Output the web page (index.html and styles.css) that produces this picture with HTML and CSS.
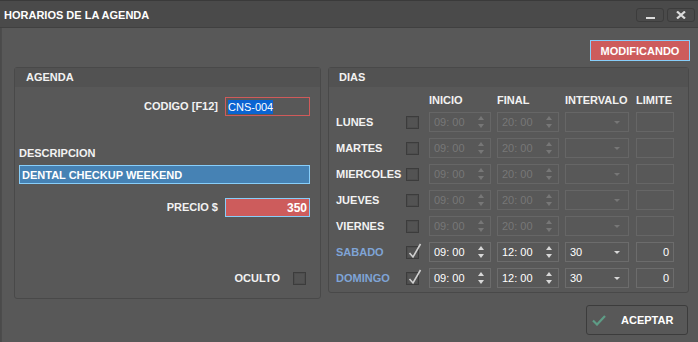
FILE: index.html
```html
<!DOCTYPE html>
<html lang="es">
<head>
  <meta charset="UTF-8">
  <title>Horarios de la agenda</title>
  <link rel="stylesheet" href="styles.css">
</head>
<body>

  <div class="window">

    <!-- Barra de titulo -->
    <div class="titlebar">
      <span class="title">HORARIOS DE LA AGENDA</span>
      <div class="winbtns">
        <div class="winbtn"><span class="dash"></span></div>
        <div class="winbtn">
          <svg width="10" height="8" viewBox="0 0 10 8"><path d="M1 0.5 L9 7.5 M9 0.5 L1 7.5" stroke="#dcdcdc" stroke-width="2.2"/></svg>
        </div>
      </div>
    </div>

    <div class="content">
      <div class="status">
        <span class="badge">MODIFICANDO</span>
      </div>

      <div class="groups">
        <!-- Agenda -->
        <section class="group agenda">
          <div class="group-head">AGENDA</div>
          <div class="agenda-body">
            <div class="field-row codigo">
              <label>CODIGO [F12]</label>
              <div class="input code"><span class="sel">CNS-004</span></div>
            </div>
            <label class="desc-label">DESCRIPCION</label>
            <div class="input desc">DENTAL CHECKUP WEEKEND</div>
            <div class="field-row precio">
              <label>PRECIO $</label>
              <div class="input price">350</div>
            </div>
            <div class="field-row oculto">
              <label>OCULTO</label>
              <span class="check"></span>
            </div>
          </div>
        </section>

        <!-- Dias -->
        <section class="group dias">
          <div class="group-head">DIAS</div>
          <div class="dias-grid">
            <span></span><span></span>
            <span class="col-head">INICIO</span>
            <span class="col-head">FINAL</span>
            <span class="col-head">INTERVALO</span>
            <span class="col-head">LIMITE</span>

            <span class="day">LUNES</span>
            <span class="check"></span>
            <div class="spin off">09: 00<i></i></div>
            <div class="spin off">20: 00<i></i></div>
            <div class="combo off"><b></b></div>
            <div class="limit off"></div>

            <span class="day">MARTES</span>
            <span class="check"></span>
            <div class="spin off">09: 00<i></i></div>
            <div class="spin off">20: 00<i></i></div>
            <div class="combo off"><b></b></div>
            <div class="limit off"></div>

            <span class="day">MIERCOLES</span>
            <span class="check"></span>
            <div class="spin off">09: 00<i></i></div>
            <div class="spin off">20: 00<i></i></div>
            <div class="combo off"><b></b></div>
            <div class="limit off"></div>

            <span class="day">JUEVES</span>
            <span class="check"></span>
            <div class="spin off">09: 00<i></i></div>
            <div class="spin off">20: 00<i></i></div>
            <div class="combo off"><b></b></div>
            <div class="limit off"></div>

            <span class="day">VIERNES</span>
            <span class="check"></span>
            <div class="spin off">09: 00<i></i></div>
            <div class="spin off">20: 00<i></i></div>
            <div class="combo off"><b></b></div>
            <div class="limit off"></div>

            <span class="day on">SABADO</span>
            <span class="check checked"><svg width="14" height="16" viewBox="0 0 14 16"><path d="M1.5 10 L5 14 L12.5 1" fill="none" stroke="#d0d0d0" stroke-width="1.6"/></svg></span>
            <div class="spin">09: 00<i></i></div>
            <div class="spin">12: 00<i></i></div>
            <div class="combo">30<b></b></div>
            <div class="limit">0</div>

            <span class="day on">DOMINGO</span>
            <span class="check checked"><svg width="14" height="16" viewBox="0 0 14 16"><path d="M1.5 10 L5 14 L12.5 1" fill="none" stroke="#d0d0d0" stroke-width="1.6"/></svg></span>
            <div class="spin">09: 00<i></i></div>
            <div class="spin">12: 00<i></i></div>
            <div class="combo">30<b></b></div>
            <div class="limit">0</div>
          </div>
        </section>
      </div>

      <div class="footer">
        <div class="accept">
          <svg width="14" height="11" viewBox="0 0 14 11"><path d="M1 5.5 L5 9.5 L13 1" fill="none" stroke="#5e9c86" stroke-width="2.2"/></svg>
          <span>ACEPTAR</span>
        </div>
      </div>
    </div>

  </div>

</body>
</html>
```

FILE: styles.css
```css
* { margin: 0; padding: 0; box-sizing: border-box; }
body {
  background: #4a4a4a;
  font-family: "Liberation Sans", Arial, sans-serif;
  font-size: 11px;
  color: #f2f2f2;
}

.window {
  width: 698px;
  height: 342px;
  display: flex;
  flex-direction: column;
  border-top: 1px solid #3a3a3a;
}

/* Barra de titulo */
.titlebar {
  height: 27px;
  display: flex;
  align-items: flex-start;
  justify-content: space-between;
  background: #4a4a4a;
  border-bottom: 1px solid #404040;
}

.title {
  font-weight: bold;
  line-height: 13px;
  margin: 8px 0 0 4px;
  color: #fff;
}

.winbtns {
  display: flex;
  gap: 3px;
  margin: 7px 3px 0 0;
}

.winbtn {
  width: 28px;
  height: 14px;
  border: 1px solid #3c3c3c;
  border-radius: 3px;
  display: flex;
  align-items: center;
  justify-content: center;
}

.dash {
  width: 9px;
  height: 2px;
  background: #dcdcdc;
  margin-top: 6px;
}

/* Contenido */
.content {
  flex: 1;
  background: #585858;
  border-left: 1px solid #4c4c4c;
  margin-left: 1px;
  padding: 12px 9px 7px 12px;
  display: flex;
  flex-direction: column;
}

.status {
  display: flex;
  justify-content: flex-end;
  padding-right: 0;
}

.badge {
  width: 100px;
  height: 21px;
  background: #cd5c5c;
  border: 1px solid #87cefa;
  font-weight: bold;
  color: #fff;
  display: flex;
  align-items: center;
  justify-content: center;
  margin-right: -1px;
}

.groups {
  display: flex;
  gap: 7px;
  margin-top: 6px;
  align-items: flex-start;
}

.group {
  border: 1px solid #494949;
  border-radius: 3px;
}

.group-head {
  height: 19px;
  background: #525252;
  font-weight: bold;
  line-height: 18px;
}

.agenda { width: 307px; height: 232px; }
.agenda .group-head { padding-left: 11px; }
.dias { width: 361px; height: 226px; }
.dias .group-head { padding-left: 10px; }

/* Agenda */
.agenda-body {
  display: flex;
  flex-direction: column;
  padding: 0 10px 0 4px;
}

.field-row {
  display: flex;
  align-items: center;
  justify-content: flex-end;
}

.field-row label, .desc-label {
  font-weight: bold;
  line-height: 13px;
}

.field-row label { margin-right: 7px; }

.codigo { margin-top: 10px; }

.input {
  height: 19px;
  display: flex;
  align-items: center;
  padding: 0 2px;
}

.input.code {
  width: 85px;
  border: 1px solid #d05a5a;
}

.sel {
  background: #0a64d2;
  color: #fff;
  line-height: 14px;
}

.desc-label { margin-top: 31px; }

.desc {
  margin-top: 5px;
  width: 291px;
  background: #4682b4;
  border: 1px solid #87cefa;
  font-weight: bold;
  color: #fff;
}

.precio { margin-top: 14px; }

.price {
  width: 85px;
  background: #cd5c5c;
  border: 1px solid #87cefa;
  font-weight: bold;
  color: #fff;
  justify-content: flex-end;
  font-size: 12px;
}

.oculto { margin-top: 55px; padding-right: 4px; }
.oculto label { margin-right: 13px; }

.check {
  width: 13px;
  height: 13px;
  border: 1px solid #3c3c3c;
  background: #535353;
  box-shadow: inset 0 0 0 1px #4d4d4d;
  position: relative;
}

.check.checked svg {
  position: absolute;
  left: 1px;
  top: -4px;
}

/* Dias */
.dias-grid {
  display: grid;
  grid-template-columns: 72px 23px 68px 68px 71px 38px;
  grid-template-rows: 13px;
  grid-auto-rows: 20px;
  row-gap: 6px;
  align-items: center;
  padding: 6px 0 0 5px;
}

.dias-grid > :nth-child(-n+6) { margin-bottom: -2px; }

.col-head {
  font-weight: bold;
  line-height: 13px;
}

.day {
  font-weight: bold;
  line-height: 13px;
  padding-left: 2px;
}

.day.on { color: #7fa4d6; }

.spin, .combo, .limit {
  height: 20px;
  border: 1px solid #6c6c6c;
  display: flex;
  align-items: center;
  padding-left: 4px;
  position: relative;
  color: #fff;
}

.spin { width: 62px; }
.combo { width: 64px; }
.limit { width: 38px; justify-content: flex-end; padding-right: 4px; }

.off { color: #777; border-color: #666; }

/* flechas del spinner */
.spin i::before, .spin i::after {
  content: "";
  position: absolute;
  right: 6px;
  border-left: 3.5px solid transparent;
  border-right: 3.5px solid transparent;
}

.spin i::before {
  top: 3px;
  border-bottom: 4px solid #d8d8d8;
}

.spin i::after {
  bottom: 3px;
  border-top: 4px solid #d8d8d8;
}

.spin.off i::before { border-bottom-color: #777; }
.spin.off i::after { border-top-color: #777; }

.combo b {
  position: absolute;
  right: 8px;
  top: 8px;
  border-left: 3.5px solid transparent;
  border-right: 3.5px solid transparent;
  border-top: 3.5px solid #d8d8d8;
}

.combo.off b { border-top-color: #777; }

/* Pie */
.footer {
  margin-top: auto;
  display: flex;
  justify-content: flex-end;
  padding-right: 1px;
}

.accept {
  width: 102px;
  height: 30px;
  border: 1px solid #3c3c3c;
  border-radius: 3px;
  display: flex;
  align-items: center;
  padding-left: 5px;
  font-weight: bold;
  color: #fff;
}

.accept span { margin-left: 15px; }
```
